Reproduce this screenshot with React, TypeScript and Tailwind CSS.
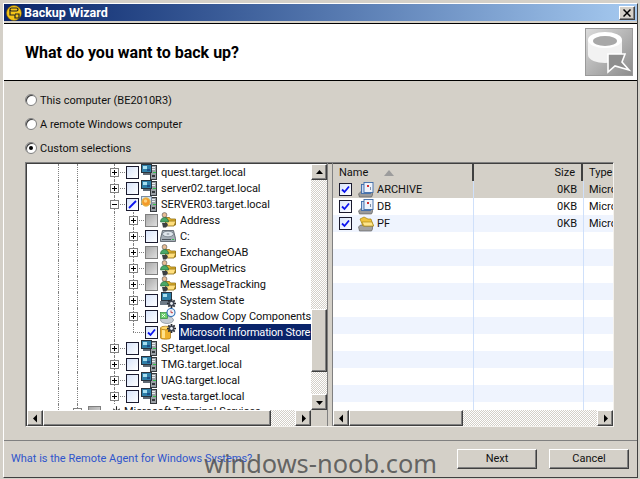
import React from "react";

const font = "font-['Roboto','Liberation_Sans',sans-serif]";
const raised = "border border-t-white border-l-white border-r-[#404040] border-b-[#404040] shadow-[inset_-1px_-1px_0_#808080] bg-[#d4d0c8]";
const track = "bg-[repeating-conic-gradient(#ffffff_0_25%,#d4d0c8_0_50%)] bg-[length:2px_2px]";

const Arrow = ({ dir }: { dir: "up" | "down" | "left" | "right" }) => {
  const points = {
    up: "1,6 4.5,2 8,6",
    down: "1,3 4.5,7 8,3",
    left: "6,0.5 2,4.5 6,8.5",
    right: "3,0.5 7,4.5 3,8.5",
  }[dir];
  return (
    <svg width="9" height="9" viewBox="0 0 9 9">
      <polygon points={points} fill="#000" />
    </svg>
  );
};

const ScrollBtn = ({ dir }: { dir: "up" | "down" | "left" | "right" }) => (
  <div className={`${raised} w-[16px] h-[16px] shrink-0 flex items-center justify-center`}>
    <Arrow dir={dir} />
  </div>
);

const Server = ({ warn }: { warn?: boolean }) => (
  <svg width="16" height="16" viewBox="0 0 16 16">
    <rect x="9.5" y="1.5" width="6" height="14" fill="#9aa0a6" stroke="#34383c" />
    <rect x="11" y="3" width="3" height="1" fill="#e8ecef" />
    <rect x="11" y="5" width="3" height="1" fill="#e8ecef" />
    <rect x="12" y="8" width="3" height="1" fill="#2fc24a" />
    <rect x="11" y="11" width="3" height="2" fill="#34383c" />
    {warn ? (
      <>
        <rect x="0.5" y="0.5" width="10" height="8" fill="#cfe0f2" stroke="#7a8da0" />
        <circle cx="5" cy="6" r="4.2" fill="#f49a2a" stroke="#e2c35a" />
        <circle cx="4.5" cy="5" r="1.8" fill="#ffd27a" />
      </>
    ) : (
      <>
        <rect x="0.5" y="0.5" width="10" height="8" fill="#2e7fa8" stroke="#2a343e" />
        <rect x="2" y="2" width="4" height="3" fill="#a9dff0" />
        <rect x="6" y="5" width="3" height="2" fill="#1f4f86" />
        <rect x="2" y="9" width="7" height="2" fill="#5f6a74" />
      </>
    )}
  </svg>
);

const FolderUser = () => (
  <svg width="16" height="16" viewBox="0 0 16 16">
    <path d="M5.5 5.5h4l1 1.5h5v6h-10z" fill="#e6b62e" stroke="#8a6a10" strokeWidth="0.8" />
    <path d="M6 9h10l-2 5H5z" fill="#ffdf7e" stroke="#8a6a10" strokeWidth="0.8" />
    <circle cx="4.5" cy="3" r="2.4" fill="#e9bd94" stroke="#4d4d4d" strokeWidth="0.6" />
    <path d="M0.5 10c0-3 1.8-4.5 4-4.5S8.5 7 8.5 10z" fill="#49a868" stroke="#1d5a30" strokeWidth="0.6" />
    <path d="M2 11h5l1 2-2 2.5H3z" fill="#3c3f42" />
  </svg>
);

const Disk = () => (
  <svg width="16" height="16" viewBox="0 0 16 16">
    <path d="M0.5 10.5l2-8h11l2 8v3h-15z" fill="#a4adb6" stroke="#4e565e" strokeWidth="0.8" />
    <ellipse cx="8" cy="6" rx="5.5" ry="2.8" fill="#dfe6ec" stroke="#6a747e" strokeWidth="0.7" />
    <ellipse cx="8" cy="6" rx="1.5" ry="0.8" fill="#8f99a3" />
    <rect x="2" y="11" width="9" height="1" fill="#4e565e" />
    <rect x="12" y="11" width="2" height="1" fill="#2fc24a" />
  </svg>
);

const Gear = ({ x, y }: { x: number; y: number }) => (
  <g transform={`translate(${x} ${y})`}>
    <path
      d="M4.5 0v9M0 4.5h9M1.3 1.3l6.4 6.4M7.7 1.3l-6.4 6.4"
      stroke="#26282e"
      strokeWidth="1.7"
    />
    <circle cx="4.5" cy="4.5" r="3" fill="#3f4552" />
    <circle cx="4.5" cy="4.5" r="1.4" fill="#eef1f5" />
  </g>
);

const SystemState = () => (
  <svg width="16" height="16" viewBox="0 0 16 16">
    <rect x="1.5" y="0.5" width="10" height="8" fill="#2e7fa8" stroke="#2a343e" />
    <rect x="3" y="2" width="4" height="3" fill="#a9dff0" />
    <rect x="0" y="9" width="9" height="4" fill="#6d7a87" />
    <Gear x={7} y={7} />
  </svg>
);

const ShadowCopy = () => (
  <svg width="16" height="16" viewBox="0 0 16 16">
    <ellipse cx="7" cy="12" rx="6.5" ry="3.5" fill="#c6cdd4" stroke="#7d8790" strokeWidth="0.7" />
    <rect x="0.5" y="4.5" width="7" height="6" fill="#6ccf6c" stroke="#2f8a3c" strokeWidth="0.7" />
    <path d="M2 6l3 3M5 6l-3 3" stroke="#fff" strokeWidth="0.8" />
    <circle cx="11" cy="4.5" r="4" fill="#eef4fb" stroke="#2d6fb5" strokeWidth="1.1" />
    <path d="M11 2.5v2.2h2" stroke="#b33" strokeWidth="0.9" fill="none" />
  </svg>
);

const InfoStore = () => (
  <svg width="16" height="16" viewBox="0 0 16 16">
    <path d="M0.5 4h10v10c0 1.6-10 1.6-10 0z" fill="#efb12c" stroke="#a3730e" strokeWidth="0.7" />
    <rect x="2" y="5" width="3" height="9" fill="#ffe28a" />
    <ellipse cx="5.5" cy="4" rx="5" ry="1.8" fill="#ffd76a" stroke="#a3730e" strokeWidth="0.7" />
    <Gear x={7} y={0} />
  </svg>
);

const TermService = () => (
  <svg width="13" height="16" viewBox="0 0 16 16" className="shrink-0">
    <path d="M8 1v14M2 8h12M4 4l8 8M12 4l-8 8" stroke="#222" strokeWidth="1.3" />
    <circle cx="8" cy="8" r="3" fill="#444" />
  </svg>
);

const StoreDb = () => (
  <svg width="16" height="16" viewBox="0 0 16 16">
    <path d="M0.5 12l3-3h11v4l-1 2H1.5z" fill="#9a9a9a" stroke="#555" strokeWidth="0.6" />
    <rect x="3.5" y="2.5" width="9" height="9" fill="#c9d8ee" stroke="#3d6aa8" strokeWidth="0.9" />
    <rect x="6" y="0.5" width="9" height="10" fill="#eef3fb" stroke="#3d6aa8" strokeWidth="0.9" />
    <rect x="9" y="3" width="2" height="2" fill="#d03030" />
    <rect x="12" y="5" width="1" height="3" fill="#8090a8" />
  </svg>
);

const StoreFolder = () => (
  <svg width="16" height="16" viewBox="0 0 16 16">
    <path d="M0.5 11l2-2h12v4l-1 2H1.5z" fill="#a2a2a2" stroke="#555" strokeWidth="0.6" />
    <path d="M2 3l4-2 4 2h3l2.5 7H5z" fill="#f0c43e" stroke="#a3820e" strokeWidth="0.7" />
    <path d="M4 6h10l1.5 4H6z" fill="#ffe68a" stroke="#a3820e" strokeWidth="0.6" />
  </svg>
);

type Check = "none" | "checked" | "partial" | "grey";

const CheckBox = ({ state }: { state: Check }) => {
  if (state === "grey")
    return <span className="w-[13px] h-[13px] shrink-0 border border-[#7f7f7f] bg-gradient-to-br from-[#a8a8a8] to-[#e0e0e0]" />;
  return (
    <span className="w-[13px] h-[13px] shrink-0 border border-[#1a1a2e] bg-gradient-to-br from-[#d8e4fa] to-white">
      {state === "checked" && (
        <svg width="11" height="11" viewBox="0 0 11 11">
          <path d="M2 5.5l2.5 2.5L9 2.5" fill="none" stroke="#0a14f0" strokeWidth="1.8" />
        </svg>
      )}
      {state === "partial" && (
        <svg width="11" height="11" viewBox="0 0 11 11">
          <path d="M2 9L9 2" fill="none" stroke="#0a14f0" strokeWidth="1.8" />
        </svg>
      )}
    </span>
  );
};

// dotted guide at the left of a cell, runs the whole row
const Guide = ({ w }: { w: number }) => (
  <span className="h-full shrink-0 border-l border-dotted border-[#808080]" style={{ width: w }} />
);

const Expander = ({ sign, line = "full" }: { sign?: "+" | "-"; line?: "full" | "top" | "bottom" }) => (
  <span className="relative w-[15px] h-full shrink-0">
    <span
      className={`absolute left-[4px] border-l border-dotted border-[#808080] ${
        line === "full" ? "top-0 bottom-0" : line === "top" ? "top-0 h-[8px]" : "top-[8px] bottom-0"
      }`}
    />
    <span className="absolute left-[4px] top-[8px] w-[11px] border-t border-dotted border-[#808080]" />
    {sign && (
      <span className="absolute left-0 top-[4px] w-[9px] h-[9px] border border-[#808080] bg-white flex items-center justify-center">
        <span className="relative w-[5px] h-[1px] bg-black">
          {sign === "+" && <span className="absolute left-[2px] top-[-2px] w-[1px] h-[5px] bg-black" />}
        </span>
      </span>
    )}
  </span>
);

interface TreeItem {
  label: string;
  icon: React.ReactNode;
  check: Check;
  level: 1 | 2;
  sign?: "+" | "-";
  selected?: boolean;
  last?: boolean;
}

const treeItems: TreeItem[] = [
  { label: "quest.target.local", icon: <Server />, check: "none", level: 1, sign: "+" },
  { label: "server02.target.local", icon: <Server />, check: "none", level: 1, sign: "+" },
  { label: "SERVER03.target.local", icon: <Server warn />, check: "partial", level: 1, sign: "-" },
  { label: "Address", icon: <FolderUser />, check: "grey", level: 2, sign: "+" },
  { label: "C:", icon: <Disk />, check: "none", level: 2, sign: "+" },
  { label: "ExchangeOAB", icon: <FolderUser />, check: "grey", level: 2, sign: "+" },
  { label: "GroupMetrics", icon: <FolderUser />, check: "grey", level: 2, sign: "+" },
  { label: "MessageTracking", icon: <FolderUser />, check: "grey", level: 2, sign: "+" },
  { label: "System State", icon: <SystemState />, check: "none", level: 2, sign: "+" },
  { label: "Shadow Copy Components", icon: <ShadowCopy />, check: "none", level: 2, sign: "+" },
  { label: "Microsoft Information Store", icon: <InfoStore />, check: "checked", level: 2, selected: true, last: true },
  { label: "SP.target.local", icon: <Server />, check: "none", level: 1, sign: "+" },
  { label: "TMG.target.local", icon: <Server />, check: "none", level: 1, sign: "+" },
  { label: "UAG.target.local", icon: <Server />, check: "none", level: 1, sign: "+" },
  { label: "vesta.target.local", icon: <Server />, check: "none", level: 1, sign: "+" },
];

const TreeRow = ({ item }: { item: TreeItem }) => (
  <div className="flex items-center h-[16px] shrink-0 pl-[31px] whitespace-nowrap">
    <Guide w={19} />
    <Guide w={33} />
    {item.level === 2 && (
      <>
        <span className="w-[4px] shrink-0" />
        <Guide w={15} />
      </>
    )}
    <Expander sign={item.sign} line={item.last ? "top" : "full"} />
    <span className="ml-[1px] flex items-center">
      <CheckBox state={item.check} />
    </span>
    <span className="ml-[2px] w-[16px] h-[16px] shrink-0">{item.icon}</span>
    <span
      className={`h-[16px] leading-[17px] ${
        item.selected
          ? "ml-[3px] pl-[1px] w-[132px] tracking-[-0.2px] bg-[#0a246a] text-white"
          : "ml-[4px] tracking-[-0.05px] text-[#101010]"
      }`}
    >
      {item.label}
    </span>
  </div>
);

interface ListItem {
  name: string;
  icon: React.ReactNode;
}

const listItems: ListItem[] = [
  { name: "ARCHIVE", icon: <StoreDb /> },
  { name: "DB", icon: <StoreDb /> },
  { name: "PF", icon: <StoreFolder /> },
];

const HScroll = ({ thumb, className }: { thumb: number; className: string }) => (
  <div className={`flex h-[16px] shrink-0 ${className}`}>
    <ScrollBtn dir="left" />
    <div className={`flex-1 ${track}`}>
      <div className={`${raised} h-full`} style={{ width: thumb }} />
    </div>
    <ScrollBtn dir="right" />
  </div>
);

const Radio = ({ label, on }: { label: string; on?: boolean }) => (
  <div className="flex items-center h-[16px] ml-[21px] gap-[3px]">
    <span className="w-[12px] h-[12px] rounded-full bg-white border border-[#808080] shadow-[inset_1px_1px_0_#404040] flex items-center justify-center">
      {on && <span className="w-[4px] h-[4px] rounded-full bg-black" />}
    </span>
    <span className="text-[#101010] pt-[2px]">{label}</span>
  </div>
);

const WizardLogo = () => (
  <svg width="48" height="48" viewBox="0 0 48 48" className="shrink-0">
    <defs>
      <linearGradient id="lg" x1="0" y1="0" x2="1" y2="1">
        <stop offset="0" stopColor="#dcdcdc" />
        <stop offset="0.55" stopColor="#b0b0b0" />
        <stop offset="1" stopColor="#8c8c8c" />
      </linearGradient>
    </defs>
    <rect x="0.5" y="0.5" width="47" height="47" fill="url(#lg)" stroke="#9a9a9a" />
    <path d="M3 12v15c0 5 9 8 17 8 8 0 17-3 17-8V12z" fill="#f2f2f2" />
    <ellipse cx="20" cy="12" rx="17" ry="8" fill="#ffffff" />
    <ellipse cx="20" cy="13" rx="12" ry="5" fill="#a8a8a8" />
    <path d="M23 26l0 18 7-6 14 4-7-8 3-8z" fill="#8e8e8e" stroke="#ffffff" strokeWidth="1.6" />
  </svg>
);

export default function App() {
  return (
    <div className={`${font} relative w-[640px] h-[479px] overflow-hidden bg-[#d4d0c8] text-[11px] pl-[3px] pt-[3px] pr-[2px] pb-[1px]`}>
      <div className="h-full flex flex-col border border-t-white border-l-white border-r-[#404040] border-b-[#404040]">
        {/* title bar */}
        <div className="h-[17px] shrink-0 flex items-center justify-between bg-gradient-to-r from-[#0a246a] to-[#a6caf0] pl-[2px] pr-[2px]">
          <div className="flex items-center gap-[2px]">
            <svg width="16" height="16" viewBox="0 0 16 16">
              <circle cx="8" cy="8" r="7.5" fill="#f5c518" stroke="#7a5a00" strokeWidth="0.6" />
              <rect x="4" y="3" width="8" height="3" rx="1.5" fill="none" stroke="#222" strokeWidth="1.2" />
              <path d="M4 5v5h5v3h4V9H9" fill="none" stroke="#222" strokeWidth="1.2" />
            </svg>
            <span className="text-white font-bold text-[12.5px] leading-none pt-[1px]">Backup Wizard</span>
          </div>
          <div className={`${raised} w-[16px] h-[14px] flex items-center justify-center`}>
            <svg width="8" height="8" viewBox="0 0 8 8">
              <path d="M0.5 0.5l7 7M7.5 0.5l-7 7" stroke="#000" strokeWidth="1.5" />
            </svg>
          </div>
        </div>

        {/* header */}
        <div className="mt-[2px] h-[58px] shrink-0 flex items-center justify-between bg-white border-y border-black pl-[21px] pr-[4px]">
          <span className="text-[16px] font-bold text-black pt-[1px]">What do you want to back up?</span>
          <WizardLogo />
        </div>

        {/* options */}
        <div className="mt-[11px] flex flex-col gap-[8px] shrink-0">
          <Radio label="This computer (BE2010R3)" />
          <Radio label="A remote Windows computer" />
          <Radio label="Custom selections" on />
        </div>

        {/* selection panes */}
        <div className="mt-[6px] ml-[21px] w-[589px] h-[265px] shrink-0 flex border border-t-[#808080] border-l-[#808080] border-r-[#f4f2ee] border-b-[#f4f2ee] shadow-[inset_1px_1px_0_#404040]">
          <div className="w-[301px] shrink-0 flex flex-col pl-[1px] pt-[1px]">
            <div className="flex-1 flex min-h-0">
              <div className="flex-1 min-w-0 bg-white overflow-hidden flex flex-col">
                {treeItems.map((item) => (
                  <TreeRow key={item.label} item={item} />
                ))}
                <div className="flex items-center h-[16px] shrink-0 pl-[31px] whitespace-nowrap">
                  <Guide w={15} />
                  <Expander sign="+" />
                  <span className="flex mr-[9px]">
                    <CheckBox state="grey" />
                  </span>
                  <TermService />
                  <span className="ml-[1px] text-[#101010]">Microsoft Terminal Services</span>
                </div>
              </div>
              <div className={`w-[16px] shrink-0 flex flex-col ${track}`}>
                <ScrollBtn dir="up" />
                <div className="flex-1 flex flex-col">
                  <div className={`${raised} w-full h-[63px] mt-[129px]`} />
                </div>
                <ScrollBtn dir="down" />
              </div>
            </div>
            <div className="flex shrink-0">
              <HScroll thumb={228} className="flex-1" />
              <div className="w-[16px] h-[16px] bg-[#d4d0c8]" />
            </div>
          </div>

          <div className="w-[6px] shrink-0 border-x border-[#808080]" />

          <div className="flex-1 min-w-0 flex flex-col pt-[1px]">
            <div className="flex h-[17px] shrink-0 bg-[#d4d0c8] text-[#101010] overflow-hidden">
              <div className="w-[141px] shrink-0 flex items-center pl-[6px] pt-[1px] border-r-2 border-r-[#404040] relative">
                Name
                <svg width="10" height="6" viewBox="0 0 10 6" className="ml-[16px]">
                  <polygon points="0,6 5,0 10,6" fill="#9c9c9c" />
                </svg>
              </div>
              <div className="w-[109px] shrink-0 flex items-center justify-end pr-[6px] pt-[1px] border-r-2 border-r-[#404040]">Size</div>
              <div className="flex-1 pl-[6px] pt-[1px] flex items-center">Type</div>
            </div>
            <div className="flex-1 min-h-0 overflow-hidden">
              {Array.from({ length: 14 }).map((_, i) => {
                const item = listItems[i];
                const bg = i === 0 ? "bg-[#d4d0c8]" : i % 2 === 0 ? "bg-[#eff4fe]" : "bg-white";
                return (
                  <div key={i} className={`flex h-[17px] ${bg}`}>
                    <div className="w-[141px] shrink-0 flex items-center pl-[6px] border-r border-r-[#cfe0fa]">
                      {item && (
                        <>
                          <CheckBox state="checked" />
                          <span className="ml-[6px] w-[16px] h-[16px]">{item.icon}</span>
                          <span className="ml-[3px] pt-[1px] text-[#101010]">{item.name}</span>
                        </>
                      )}
                    </div>
                    <div className="w-[110px] shrink-0 flex items-center justify-end pr-[6px] pt-[1px] border-r border-r-[#cfe0fa] text-[#101010]">
                      {item && "0KB"}
                    </div>
                    <div className="flex-1 min-w-0 overflow-hidden pl-[5px] pt-[1px] flex items-center text-[#101010]">
                      {item && "Micro"}
                    </div>
                  </div>
                );
              })}
            </div>
            <HScroll thumb={114} className="" />
          </div>
        </div>

        {/* footer */}
        <div className="mt-[13px] shrink-0 h-[1px] bg-[#808080] border-b-0" />
        <div className="flex-1 flex items-center justify-between pl-[7px] pr-[8px]">
          <span className="text-[#2f55cc] mt-[1px]">What is the Remote Agent for Windows Systems?</span>
          <div className="flex gap-[12px] mt-[-1px]">
            <div className={`${raised} w-[80px] h-[20px] pt-[1px] flex items-center justify-center text-[#101010]`}>Next</div>
            <div className={`${raised} w-[80px] h-[20px] pt-[1px] flex items-center justify-center text-[#101010]`}>Cancel</div>
          </div>
        </div>
      </div>

      <span className="absolute left-[204px] top-[447px] font-['Noto_Sans',sans-serif] text-[25.4px] leading-[32px] text-[#555555]/90 pointer-events-none">
        windows-noob.com
      </span>
    </div>
  );
}
